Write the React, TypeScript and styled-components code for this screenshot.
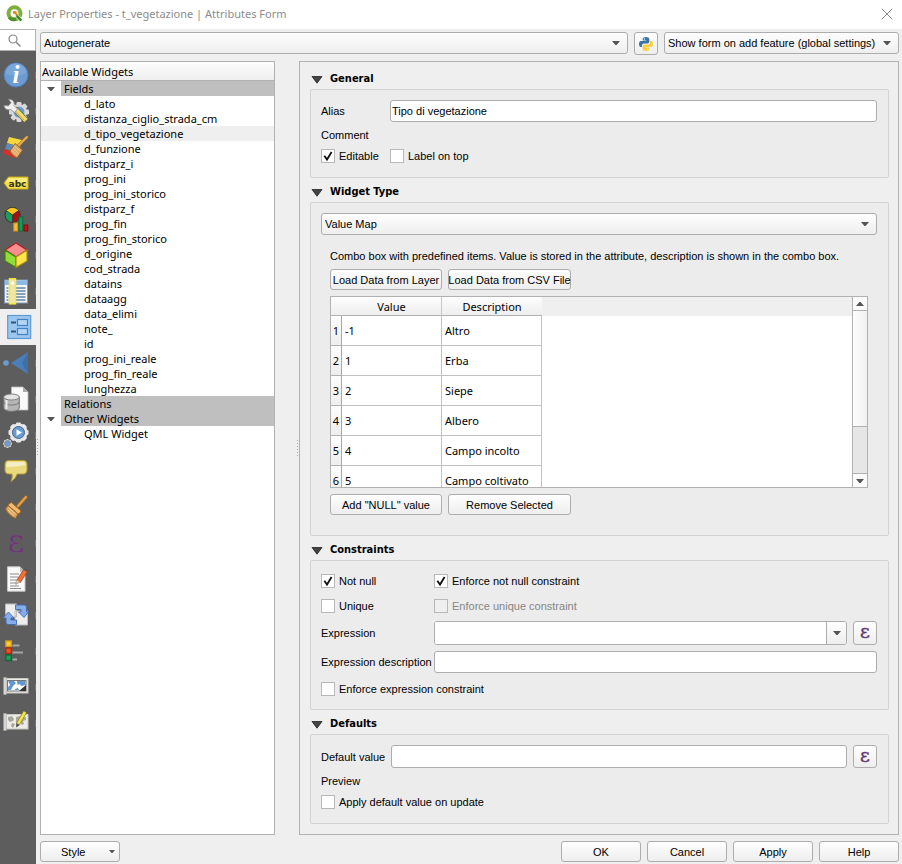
import React, { ReactNode, useId, useState } from "react";
import styled, { createGlobalStyle, css } from "styled-components";

const UI = `"Liberation Sans", Arial, sans-serif`;
const VIEW = `"Noto Sans", "Open Sans", sans-serif`;
const HEAD = `"DejaVu Sans Condensed", "Noto Sans", sans-serif`;
const LINE = "#b1b1b1";

const GlobalStyle = createGlobalStyle`
  *, *::before, *::after { box-sizing: border-box; }
  body { margin: 0; background: #efefef; color: #000; font: 11px/14px ${UI}; }
  button, input, select { font: inherit; color: inherit; margin: 0; }
  svg { display: block; flex: none; overflow: visible; }
`;

/* ---------- window frame ---------- */
const Window = styled.div`
  min-height: 100vh;
  display: grid;
  grid-template-rows: 29px 1fr;
`;
const TitleBar = styled.header`
  display: flex;
  align-items: center;
  gap: 4px;
  padding: 0 9px 2px 6px;
  background: #fff;
`;
const WindowTitle = styled.h1`
  flex: 1;
  margin: 0;
  font: 11px/16px ${VIEW};
  color: #8c8c8c;
`;
const CloseButton = styled.button`
  border: 0;
  padding: 0;
  background: none;
`;
const Body = styled.div`
  display: grid;
  grid-template-columns: 36px 4px minmax(0, 1fr);
`;

/* ---------- side bar ---------- */
const Sidebar = styled.nav`
  display: flex;
  flex-direction: column;
  background: #5d5d5d;
`;
const SearchBox = styled.label`
  display: grid;
  grid-template-columns: 26px 1fr;
  align-items: center;
  height: 22px;
  margin-bottom: 6px;
  padding-left: 8px;
  background: #fff;
  border: 1px solid ${LINE};
  border-left: 0;
`;
const SearchInput = styled.input`
  min-width: 0;
  width: 100%;
  border: 0;
  padding: 0;
  outline: 0;
`;
const NavButton = styled.button<{ $active: boolean }>`
  display: flex;
  align-items: center;
  justify-content: space-between;
  height: 36px;
  border: 0;
  padding: 0 0 0 ${(p) => (p.$active ? 6 : 3)}px;
  background: ${(p) => (p.$active ? "#efefef" : "transparent")};
  &::after {
    content: "";
    width: 1px;
    height: 7px;
    background: ${(p) => (p.$active ? "transparent" : "#6475a3")};
  }
`;

/* ---------- main area ---------- */
const Main = styled.main`
  display: grid;
  grid-template-rows: 23px 1fr 21px;
  gap: 6px;
  padding: 3px 3px 2px 0;
`;
const TopRow = styled.div`
  display: grid;
  grid-template-columns: minmax(0, 1fr) 24px 235px;
  gap: 6px;
  align-items: start;
`;
const Panes = styled.div`
  display: grid;
  grid-template-columns: 235px 24px minmax(0, 1fr);
`;
const Grip = styled.div<{ $end?: boolean }>`
  display: flex;
  align-items: center;
  justify-content: ${(p) => (p.$end ? "flex-end" : "center")};
`;
const Footer = styled.footer`
  display: flex;
  gap: 6px;
`;
const Spacer = styled.div`
  flex: 1;
`;

/* ---------- controls ---------- */
const raised = css`
  border: 1px solid #adadad;
  border-radius: 3px;
  background: linear-gradient(#fefefe, #eeeeee);
`;
const Button = styled.button<{ $width: number; $menu?: boolean }>`
  ${raised}
  display: flex;
  align-items: center;
  justify-content: ${(p) => (p.$menu ? "space-between" : "center")};
  width: ${(p) => p.$width}px;
  height: 21px;
  padding: ${(p) => (p.$menu ? "0 4px 0 20px" : "0")};
  white-space: nowrap;
`;
const ToolButton = styled.button`
  ${raised}
  display: grid;
  place-items: center;
  align-self: stretch;
  width: 24px;
  padding: 0;
`;
const SelectFrame = styled.div`
  display: grid;
  align-items: center;
  > * { grid-area: 1 / 1; }
  > svg { justify-self: end; margin-right: 8px; pointer-events: none; }
`;
const Select = styled.select`
  ${raised}
  appearance: none;
  width: 100%;
  height: 22px;
  padding: 0 20px 0 3px;
  outline: 0;
`;
const TextInput = styled.input`
  width: 100%;
  height: 22px;
  min-width: 0;
  padding: 0 1px;
  border: 1px solid #adadad;
  border-radius: 3px;
  background: #fff;
  outline: 0;
`;
const ComboFrame = styled.div`
  display: grid;
  grid-template-columns: minmax(0, 1fr) 20px;
  height: 24px;
  border: 1px solid #adadad;
  border-radius: 3px;
  overflow: hidden;
  background: #fff;
`;
const ComboInput = styled.input`
  min-width: 0;
  border: 0;
  padding: 0 2px;
  outline: 0;
`;
const ComboArrow = styled.button`
  display: grid;
  place-items: center;
  border: 0;
  border-left: 1px solid #adadad;
  padding: 0;
  background: linear-gradient(#fefefe, #eeeeee);
`;
const CheckLabel = styled.label<{ $disabled?: boolean }>`
  display: flex;
  align-items: center;
  gap: 4px;
  height: 16px;
  white-space: nowrap;
  color: ${(p) => (p.$disabled ? "#868686" : "#000")};
`;
const CheckFrame = styled.span`
  display: grid;
  place-items: center;
  > * { grid-area: 1 / 1; }
  > svg { visibility: hidden; pointer-events: none; }
  > input:checked + svg { visibility: visible; }
`;
const CheckInput = styled.input`
  appearance: none;
  width: 14px;
  height: 14px;
  border: 1px solid #b8b8b8;
  background: #fff;
  &:disabled { background: #efefef; }
`;

/* ---------- widget tree ---------- */
const TreePanel = styled.section`
  background: #fff;
  border: 1px solid ${LINE};
  font: 11px/15px ${VIEW};
`;
const TreeHeader = styled.h2`
  height: 19px;
  margin: 0;
  padding: 2px 1px;
  border-bottom: 1px solid ${LINE};
  background: linear-gradient(#fdfdfd, #eeeeee);
  font: 11px/15px ${VIEW};
`;
const TreeList = styled.ul`
  margin: 0;
  padding: 0;
  list-style: none;
`;
const TreeGroup = styled.div`
  display: grid;
  grid-template-columns: 20px 1fr;
  align-items: center;
`;
const GroupName = styled.span`
  padding-left: 3px;
  background: #bfbfbf;
`;
const Twisty = styled.button`
  display: grid;
  place-items: center;
  border: 0;
  padding: 0;
  background: none;
`;
const TreeItem = styled.li<{ $current: boolean }>`
  height: 15px;
  padding-left: 43px;
  background: ${(p) => (p.$current ? "#efefef" : "transparent")};
`;

/* ---------- form sections ---------- */
const FormPane = styled.section`
  display: flex;
  flex-direction: column;
  gap: 4px;
  padding: 7px 9px 10px 10px;
  border: 1px solid ${LINE};
`;
const SectionTitle = styled.h2`
  height: 20px;
  margin: 0;
`;
const SectionToggle = styled.button`
  display: flex;
  align-items: center;
  gap: 7px;
  height: 20px;
  padding: 0 0 0 1px;
  border: 0;
  background: none;
  font: bold 11px/16px ${HEAD};
  svg { margin-top: 2px; }
`;
const Group = styled.div<{ $bottom: number; $top?: number }>`
  padding: ${(p) => p.$top ?? 10}px 11px ${(p) => p.$bottom}px 10px;
  border: 1px solid #d3d3d3;
  border-radius: 2px;
  background: #ececec;
`;
const Fields = styled.div<{ $label: number }>`
  display: grid;
  grid-template-columns: ${(p) => p.$label}px minmax(0, 1fr);
  row-gap: 6px;
  align-items: center;
`;
const WithButton = styled.div`
  display: grid;
  grid-template-columns: minmax(0, 1fr) 24px;
  gap: 6px;
`;
const DefaultInput = styled(TextInput)`
  height: 23px;
`;
const DefaultCheck = styled.div`
  padding-top: 6px;
`;
const CheckGrid = styled.div`
  display: grid;
  grid-template-columns: 113px 1fr;
  grid-auto-rows: 25px;
  align-items: center;
`;
const ConstraintFields = styled(Fields)`
  margin: 3px 0;
`;
const ValueMap = styled.div`
  display: grid;
  gap: 6px;
  padding: 14px 9px 0;
`;
const Hint = styled.p`
  margin: 0;
  white-space: nowrap;
`;
const ButtonRow = styled.div`
  display: flex;
  gap: 6px;
`;

/* ---------- value table ---------- */
const TableFrame = styled.div`
  display: grid;
  grid-template-columns: minmax(0, 1fr) 15px;
  height: 192px;
  border: 1px solid ${LINE};
  background: #fff;
  overflow: hidden;
`;
const TableView = styled.div`
  min-height: 0;
  overflow: hidden;
`;
const Table = styled.table`
  width: 100%;
  table-layout: fixed;
  border-collapse: separate;
  border-spacing: 0;
  font: 11px/15px ${VIEW};
`;
const HeadCell = styled.th<{ $last?: boolean }>`
  height: 19px;
  padding: 0;
  font-weight: normal;
  border-bottom: 1px solid ${LINE};
  border-right: ${(p) => (p.$last ? "0" : "1px solid #c8c8c8")};
  background: linear-gradient(#fdfdfd, #eeeeee);
`;
const CornerCell = styled(HeadCell)`
  border-right: 0;
`;
const HeadFill = styled.td`
  padding: 0;
  background: #efefef;
`;
const RowHead = styled.th`
  height: 30px;
  padding: 0;
  font-weight: normal;
  border-right: 1px solid #a8a8a8;
  border-bottom: 1px solid ${LINE};
  background: linear-gradient(#fdfdfd, #eeeeee);
`;
const Cell = styled.td`
  padding: 0 3px;
  border-right: 1px solid #c2c2c2;
  border-bottom: 1px solid #c2c2c2;
  white-space: nowrap;
`;
const Scrollbar = styled.div`
  display: grid;
  grid-template-rows: 14px 116px 1fr 14px;
  border-left: 1px solid ${LINE};
  background: #e6e6e6;
`;
const ScrollButton = styled.button<{ $down?: boolean }>`
  display: grid;
  place-items: center;
  padding: 0;
  border: 0 solid ${LINE};
  border-width: ${(p) => (p.$down ? "1px 0 0" : "0 0 1px")};
  background: #fafafa;
  svg { transform: ${(p) => (p.$down ? "none" : "rotate(180deg)")}; }
`;
const Thumb = styled.div`
  border-bottom: 1px solid ${LINE};
  background: linear-gradient(90deg, #fefefe, #f1f1f1);
`;

/* ---------- small glyphs ---------- */
const Arrow = ({ w = 8 }: { w?: number }) => (
  <svg width={w} height={w / 2} viewBox="0 0 8 4"><path d="M0 0h8L4.6 4H3.4z" fill="#555" /></svg>
);
const SectionArrow = () => (
  <svg width="12" height="8" viewBox="0 0 12 8"><path d="M1 .5h10L6 7.200z" fill="#444" stroke="#222" strokeWidth=".8" /></svg>
);
const Tick = () => (
  <svg width="10" height="10" viewBox="0 0 10 10">
    <path d="M1.300 4.700 4 8.500 8.600 1" fill="none" stroke="#111" strokeWidth="1.800" />
  </svg>
);
const Dots = () => (
  <svg width="2" height="18" viewBox="0 0 2 18">
    {[0, 3, 6, 9, 12, 15].map((y) => <rect key={y} y={y + 1} width="1" height="1" fill="#aaa" />)}
  </svg>
);
const Epsilon = () => (
  <svg width="20" height="20" viewBox="0 0 20 20">
    <text x="10" y="15" textAnchor="middle" fontFamily="DejaVu Serif, Liberation Serif, serif" fontSize="19" fill="#643a6b" stroke="#643a6b" strokeWidth=".4">ε</text>
  </svg>
);
const Logo = () => (
  <svg width="18" height="18" viewBox="0 0 18 18">
    <circle cx="8.500" cy="8.300" r="6" fill="none" stroke="#7fae3c" strokeWidth="4" />
    <path d="M3 12.500a6.300 6.300 0 0 0 7 1.700" fill="none" stroke="#4f8f2b" strokeWidth="3" />
    <path d="m9.500 9.500 2.500.3 4.800 5.200-2.600 1.800-4.300-4.600z" fill="#3f8b2c" stroke="#fff" strokeWidth=".7" />
    <path d="m7 6 4 .5-.7 1.200 1.600 2-1.500.8-1.800-2-1.200.9z" fill="#ee7913" />
  </svg>
);
const Python = () => (
  <svg width="14" height="14" viewBox="0 0 14 14">
    <path d="M7 0C4.300 0 3.700 1 3.700 2v1.500h3.500V4H2C.8 4 0 5.200 0 7s.8 3 1.800 3H3V8.300C3 7.200 4 6.500 5 6.500h3.500c1 0 1.800-.8 1.800-1.700V2C10.300.8 9 0 7 0z" fill="#3a75a8" />
    <path d="M7 14c2.700 0 3.300-1 3.300-2v-1.500H6.800V10H12c1.200 0 2-1.200 2-3s-.8-3-1.800-3H11v1.700c0 1.100-1 1.800-2 1.800H5.500c-1 0-1.800.8-1.800 1.700V12c0 1.200 1.300 2 3.300 2z" fill="#fdcf3c" />
    <circle cx="5.400" cy="1.900" r=".7" fill="#fff" /><circle cx="8.600" cy="12.100" r=".7" fill="#fff" />
  </svg>
);

/* ---------- side bar drawings, all on a 26 unit square ---------- */
const gear = (cx: number, cy: number, r: number) =>
  [0, 45, 90, 135].map((a) => (
    <rect key={a} x={cx - r} y={cy - r / 4} width={r * 2} height={r / 2} rx={r / 8} transform={`rotate(${a} ${cx} ${cy})`} />
  ));

const BrushHead = () => (
  <>
    <path d="M15 12 23 3" stroke="#a3691f" strokeWidth="3.400" strokeLinecap="round" />
    <path d="M15 12 23 3" stroke="#e2a14a" strokeWidth="2" strokeLinecap="round" />
    <path d="M8.500 8.500 18 17c-.5 1.800-2 2.500-3 3l-10-8.500c.8-1.500 2-2.500 3.500-3z" fill="#f0ba70" stroke="#9c6524" />
    <path d="m5 11.500 10 8.500-2.500 4.500C9 23 4.500 19.500 2.500 15z" fill="#dba45c" stroke="#9c6524" />
    <path d="m5 16 6 5.500M5.500 13.500l7 6.500" stroke="#f7d7a5" strokeWidth=".9" />
  </>
);
const MapSheet = () => (
  <>
    <rect x="2.500" y="4.500" width="22.500" height="14.500" fill="#ecebe6" stroke="#c9c9c4" />
    <path d="M.7 3.500h2.600v17H.7z" fill="#ddd" stroke="#aaa" strokeWidth=".7" />
  </>
);

const drawings: { name: string; art: ReactNode }[] = [
  { name: "Information", art: <>
    <circle cx="13" cy="13" r="12" fill="#6b9bd2" stroke="#4e7fbc" />
    <path d="M2.500 12a10.500 10.500 0 0 1 21-1c-6 3-14 4-21 1z" fill="#8bb3de" opacity=".5" />
    <text x="13" y="20.500" textAnchor="middle" fontFamily="Liberation Serif, serif" fontStyle="italic" fontWeight="bold" fontSize="25" fill="#fff">i</text></> },
  { name: "Source", art: <>
    <g fill="#dadada">{gear(16, 14, 10)}</g>
    <circle cx="16" cy="14" r="7.800" fill="#dadada" /><circle cx="16" cy="14" r="5.500" fill="#6b9bd2" />
    <path d="m11.500 10.500 12 12.500" stroke="#6f6a35" strokeWidth="6" />
    <path d="m12 11 11 11.500" stroke="#f1dd78" strokeWidth="4.400" />
    <path d="m12.500 13 9 9.500" stroke="#c6a93e" />
    <path d="M1 7.500c.5 3.500 3.500 5 6.500 4l4 3 3-3.500L11 7.500C12 4 9.500 1 5.500 1.200L8 4.700 5.500 7.800z" fill="#efefef" stroke="#8d8d8d" strokeWidth=".8" /></> },
  { name: "Symbology", art: <>
    <path d="m6 3 13 3-2 7L4 9z" fill="#f4d73c" /><path d="m4 9 13 4-2 6L2 15z" fill="#6089b8" /><path d="m2 15 12 4-3 5L0 19z" fill="#db2e2a" />
    <path d="m15 12 9-9" stroke="#a3691f" strokeWidth="3" strokeLinecap="round" /><path d="m15 12 9-9" stroke="#e8ac58" strokeWidth="1.800" strokeLinecap="round" />
    <path d="m12 9.500 7.500 6.500-5.500 8C11.500 22.500 8.500 20 7 17z" fill="#dfaa69" stroke="#9c6524" />
    <path d="m10 14 6 6M8.500 16l6 5.500M11.500 12l6 5.500" stroke="#f3cf9a" strokeWidth=".8" /></> },
  { name: "Labels", art: <>
    <path d="m1 13 4.500-6H25v12H5.500z" fill="#f5e04c" stroke="#c9a91c" />
    <path d="M5.800 8H24v4H3z" fill="#fbf08c" opacity=".7" />
    <text x="14.500" y="16.500" textAnchor="middle" fontFamily="DejaVu Sans" fontWeight="bold" fontSize="9" fill="#33321c">abc</text></> },
  { name: "Diagrams", art: <>
    <circle cx="9.500" cy="9" r="7.500" fill="#16a05c" stroke="#333" />
    <path d="M9.500 9 3.300 4.700a7.500 7.500 0 0 1 12.400 0z" fill="#f8c61c" stroke="#333" strokeWidth=".8" />
    <path d="m9.500 9 6.200-4.300A7.500 7.500 0 0 1 9.500 16.500z" fill="#a80f14" stroke="#333" strokeWidth=".8" />
    <rect x="10.800" y="17" width="4" height="8" fill="#f5bc35" stroke="#d88f12" /><rect x="16" y="11" width="3.800" height="14" fill="#149a5c" stroke="#0a6b3e" /><rect x="21" y="19" width="3.800" height="6" fill="#c2131a" stroke="#820b10" /></> },
  { name: "3D View", art: <>
    <path d="m13 1 11 7-11 7L2 8z" fill="#f78d8d" stroke="#b02426" strokeWidth="1.400" />
    <path d="m2 8 11 7v10.500L2 19z" fill="#91de36" stroke="#3f7f12" strokeWidth="1.200" /><path d="m24 8-11 7v10.500L24 19z" fill="#fae64a" stroke="#b08c12" strokeWidth="1.200" /></> },
  { name: "Fields", art: <>
    <rect x="1.500" y="2" width="23" height="23" fill="#f5f5f5" stroke="#8098b5" /><path d="M2 2.500h22v4.500H2z" fill="#8db8e6" />
    <path d="M3.500 10h2m7 0h10M3.500 13h2m7 0h10M3.500 16h2m7 0h10M3.500 19h2m7 0h10M3.500 22h2m7 0h10" stroke="#6185ae" strokeWidth="1.500" />
    <rect x="6.500" y=".8" width="6" height="25" fill="#f0e3ae" stroke="#f5ea34" strokeWidth="1.500" /><circle cx="9.500" cy="5" r="1.500" fill="#fff" /></> },
  { name: "Attributes Form", art: <>
    <rect x="1.700" y="1.500" width="23" height="23" fill="#9cc6ee" stroke="#5e9ad2" strokeWidth="1.200" />
    <path d="M5 8.500h5M5 17.500h5" stroke="#2d5781" strokeWidth="2.200" />
    <rect x="11.500" y="5.500" width="10" height="6" fill="#b4d5f4" stroke="#3e84c4" strokeWidth="1.200" /><rect x="11.500" y="14.500" width="10" height="6" fill="#b4d5f4" stroke="#3e84c4" strokeWidth="1.200" /></> },
  { name: "Joins", art: <>
    <path d="M8 13 25 2v22z" fill="#4a7eb6" /><path d="M25 2v22l-6-11z" fill="#36689e" opacity=".6" /><circle cx="3" cy="13" r="2.800" fill="#6b9bd2" /></> },
  { name: "Auxiliary Storage", art: <>
    <path d="M8.500 1H20l5 5v18H8.500z" fill="#f9f9f9" stroke="#bbb" strokeWidth=".8" /><path d="M20 1v5h5z" fill="#aaa" />
    <path d="M.7 11v11c0 4.500 15.600 4.500 15.600 0V11z" fill="#b5b5b5" stroke="#727272" /><ellipse cx="8.500" cy="11" rx="7.800" ry="3" fill="#e4e4e4" stroke="#808080" />
    <path d="M1 16c0 4 15 4 15 0" fill="none" stroke="#777" /><path d="M3.500 14v9" stroke="#ececec" strokeWidth="2" /></> },
  { name: "Actions", art: <>
    <g fill="#e8e8e8">{gear(15.5, 10.5, 10)}</g><g fill="#e8e8e8" transform="rotate(22.500 15.500 10.500)">{gear(15.5, 10.5, 9)}</g>
    <circle cx="15.500" cy="10.500" r="6" fill="#6b9bd2" stroke="#45658c" /><path d="m13.500 7.300 5.500 3.200-5.500 3.200z" fill="#fff" />
    <g fill="#d5d5d5">{gear(4.5, 21.5, 4.5)}</g><circle cx="4.500" cy="21.500" r="2.900" fill="#6b9bd2" stroke="#888" strokeWidth=".6" /></> },
  { name: "Display", art: <>
    <path d="M6 2.500h14c3 0 4 1.500 4 4v5c0 3-1.500 4.500-4 4.500h-6c-1 3-3 6-6 7.500 1-2 1.500-5 1-7.500H6c-3 0-4-1.500-4-4.500v-5c0-2.500 1-4 4-4z" fill="#e9da7d" stroke="#b39c36" />
    <path d="M6.500 4h13c2 0 3 1 3 3-6 1-12 2-19 2V7c0-2 1-3 3-3z" fill="#fff" opacity=".55" /></> },
  { name: "Rendering", art: <BrushHead /> },
  { name: "Variables", art: <text x="13" y="22" textAnchor="middle" fontFamily="DejaVu Serif, Liberation Serif, serif" fontSize="32" fill="#643a6b" stroke="#7b4d83" strokeWidth=".5">ε</text> },
  { name: "Metadata", art: <>
    <path d="M4.500.8H17l5 5v19.400H4.500z" fill="#fbfbfb" stroke="#c4c4c4" /><path d="M17 .8v5h5z" fill="#bbb" />
    <path d="M7 8h9M7 11h8M7 14h6M7 17h6M7 20h9M7 22.500h11" stroke="#8b8b8b" /><path d="m15.500 15.500 7-11" stroke="#b2401d" strokeWidth="5" /><path d="m15.500 15.500 7-11" stroke="#ee7236" strokeWidth="3.400" />
    <path d="m13.500 13.500-.8 5 4.500-2.500z" fill="#e9c9a1" stroke="#777" strokeWidth=".5" /><path d="m21 3 4 2.500" stroke="#555" strokeWidth="2" /></> },
  { name: "Dependencies", art: <>
    <path d="M2.500 2h11v13h-11zM12 9h12.500v14H12z" fill="#ededed" stroke="#bbb" />
    <path d="M12.500 3H21c2 0 2.500 1 2.500 3v4h2L21 15.500 15.500 10H18V7.500h-5.500z" fill="#86adea" stroke="#3e6cb3" strokeWidth=".9" />
    <path d="M13.500 22.500H5.500c-2 0-2.500-1-2.500-3V16H0l5.500-6L11 16H8v2h5.500z" fill="#86adea" stroke="#3e6cb3" strokeWidth=".9" /></> },
  { name: "Legend", art: <>
    <rect x="2.800" y="3" width="5.500" height="5.500" fill="#ffce2b" stroke="#d89a0e" strokeWidth="1.400" /><rect x="2.800" y="10" width="5.500" height="5.500" fill="#f4511e" stroke="#b02b0a" strokeWidth="1.400" /><rect x="2.800" y="17" width="5.500" height="5.500" fill="#19a65b" stroke="#0b6b36" strokeWidth="1.400" />
    <path d="M9.500 7.500h7M9.500 14.500h10.500M9.500 21.500h4.500" stroke="#a5a5a5" strokeWidth="2" /></> },
  { name: "QGIS Server", art: <>
    <MapSheet /><rect x="4.500" y="6.500" width="18.500" height="10.500" fill="#fff" stroke="#777" />
    <path d="M5 7h6l2 2-3 3-2 4H5v-3l2-2zM14 7h8.500v4l-4 1-2-2-2 1zM12 15l3-1 1 2h-4z" fill="#6397cf" /><path d="m16 17 7-6v6z" fill="#333" /></> },
  { name: "Digitizing", art: <>
    <MapSheet /><path d="m5 7 4-1 2 3-1 2-3 1-2-2zM9 13l3 1-2 4-2-2zM13 7l4-1 1 2 5-1v3l-3 1 1 3-2 1-2-3-1 4-2 1-1-5z" fill="#a7a7a0" />
    <path d="m15 14 7-12" stroke="#8d8415" strokeWidth="4" /><path d="m15 14 7-12" stroke="#f0e24f" strokeWidth="2.600" /><path d="m13.300 13-.3 4.500 3.700-2.500z" fill="#555" /></> },
];

/* ---------- composed parts ---------- */
function Check({ label, checked = false, disabled }: { label: string; checked?: boolean; disabled?: boolean }) {
  return (
    <CheckLabel $disabled={disabled}>
      <CheckFrame><CheckInput type="checkbox" defaultChecked={checked} disabled={disabled} /><Tick /></CheckFrame>
      {label}
    </CheckLabel>
  );
}
function Dropdown({ label, value }: { label: string; value: string }) {
  return <SelectFrame><Select aria-label={label} defaultValue={value}><option>{value}</option></Select><Arrow /></SelectFrame>;
}
function Section({ title, top, bottom, children }: { title: string; top?: number; bottom: number; children: ReactNode }) {
  const [open, setOpen] = useState(true);
  return (
    <div>
      <SectionTitle>
        <SectionToggle type="button" aria-expanded={open} onClick={() => setOpen(!open)}><SectionArrow />{title}</SectionToggle>
      </SectionTitle>
      {open && <Group $top={top} $bottom={bottom}>{children}</Group>}
    </div>
  );
}

const tree = [
  { name: "Fields", items: ["d_lato", "distanza_ciglio_strada_cm", "d_tipo_vegetazione", "d_funzione", "distparz_i", "prog_ini", "prog_ini_storico", "distparz_f", "prog_fin", "prog_fin_storico", "d_origine", "cod_strada", "datains", "dataagg", "data_elimi", "note_", "id", "prog_ini_reale", "prog_fin_reale", "lunghezza"] },
  { name: "Relations", items: [] },
  { name: "Other Widgets", items: ["QML Widget"] },
];
const values = [["-1", "Altro"], ["1", "Erba"], ["2", "Siepe"], ["3", "Albero"], ["4", "Campo incolto"], ["5", "Campo coltivato"]];

export default function App() {
  const id = useId();
  const [page, setPage] = useState("Attributes Form");
  const [current, setCurrent] = useState("d_tipo_vegetazione");
  return (
    <Window>
      <GlobalStyle />
      <TitleBar>
        <Logo />
        <WindowTitle>Layer Properties - t_vegetazione | Attributes Form</WindowTitle>
        <CloseButton type="button" aria-label="Close">
          <svg width="12" height="12" viewBox="0 0 12 12"><path d="m.8.8 10.400 10.400M11.200.8.8 11.200" stroke="#888" /></svg>
        </CloseButton>
      </TitleBar>
      <Body>
        <Sidebar>
          <SearchBox>
            <svg width="13" height="13" viewBox="0 0 13 13"><circle cx="5" cy="5" r="4" fill="none" stroke="#888" strokeWidth="1.200" /><path d="m8 8 4.500 4.500" stroke="#888" strokeWidth="1.500" /></svg>
            <SearchInput aria-label="Search" />
          </SearchBox>
          {drawings.map((d) => (
            <NavButton key={d.name} type="button" aria-label={d.name} $active={d.name === page} onClick={() => setPage(d.name)}>
              <svg width="26" height="26" viewBox="0 0 26 26" fill="none">{d.art}</svg>
            </NavButton>
          ))}
        </Sidebar>
        <Grip><Dots /></Grip>
        <Main>
          <TopRow>
            <Dropdown label="Form layout" value="Autogenerate" />
            <ToolButton type="button" aria-label="Python init function"><Python /></ToolButton>
            <Dropdown label="Show form" value="Show form on add feature (global settings)" />
          </TopRow>
          <Panes>
            <TreePanel>
              <TreeHeader>Available Widgets</TreeHeader>
              <TreeList>
                {tree.map((g) => (
                  <li key={g.name}>
                    <TreeGroup>
                      {g.items.length ? <Twisty type="button" aria-label={`Collapse ${g.name}`}><Arrow /></Twisty> : <span />}
                      <GroupName>{g.name}</GroupName>
                    </TreeGroup>
                    <TreeList>
                      {g.items.map((t) => <TreeItem key={t} $current={t === current} onClick={() => setCurrent(t)}>{t}</TreeItem>)}
                    </TreeList>
                  </li>
                ))}
              </TreeList>
            </TreePanel>
            <Grip $end><Dots /></Grip>
            <FormPane>
              <Section title="General" bottom={13}>
                <Fields $label={69}>
                  <label htmlFor={`${id}alias`}>Alias</label>
                  <TextInput id={`${id}alias`} defaultValue="Tipo di vegetazione" />
                  <span>Comment</span><span />
                  <Check label="Editable" checked />
                  <Check label="Label on top" />
                </Fields>
              </Section>
              <Section title="Widget Type" bottom={20}>
                <Dropdown label="Widget type" value="Value Map" />
                <ValueMap>
                  <Hint>Combo box with predefined items. Value is stored in the attribute, description is shown in the combo box.</Hint>
                  <ButtonRow>
                    <Button type="button" $width={112}>Load Data from Layer</Button>
                    <Button type="button" $width={123}>Load Data from CSV File</Button>
                  </ButtonRow>
                  <TableFrame>
                    <TableView>
                      <Table>
                        <colgroup><col width="11" /><col width="100" /><col width="100" /><col /></colgroup>
                        <thead>
                          <tr><CornerCell /><HeadCell scope="col">Value</HeadCell><HeadCell scope="col" $last>Description</HeadCell><HeadFill /></tr>
                        </thead>
                        <tbody>
                          {values.map(([v, d], i) => (
                            <tr key={v}><RowHead scope="row">{i + 1}</RowHead><Cell>{v}</Cell><Cell>{d}</Cell></tr>
                          ))}
                        </tbody>
                      </Table>
                    </TableView>
                    <Scrollbar>
                      <ScrollButton type="button" aria-label="Scroll up"><Arrow /></ScrollButton>
                      <Thumb />
                      <span />
                      <ScrollButton type="button" aria-label="Scroll down" $down><Arrow /></ScrollButton>
                    </Scrollbar>
                  </TableFrame>
                  <ButtonRow>
                    <Button type="button" $width={112}>Add "NULL" value</Button>
                    <Button type="button" $width={123}>Remove Selected</Button>
                  </ButtonRow>
                </ValueMap>
              </Section>
              <Section title="Constraints" top={7} bottom={8}>
                <CheckGrid>
                  <Check label="Not null" checked />
                  <Check label="Enforce not null constraint" checked />
                  <Check label="Unique" />
                  <Check label="Enforce unique constraint" disabled />
                </CheckGrid>
                <ConstraintFields $label={113}>
                  <label htmlFor={`${id}expr`}>Expression</label>
                  <WithButton>
                    <ComboFrame>
                      <ComboInput id={`${id}expr`} />
                      <ComboArrow type="button" aria-label="Recent expressions"><Arrow /></ComboArrow>
                    </ComboFrame>
                    <ToolButton type="button" aria-label="Edit expression"><Epsilon /></ToolButton>
                  </WithButton>
                  <label htmlFor={`${id}desc`}>Expression description</label>
                  <TextInput id={`${id}desc`} />
                </ConstraintFields>
                <CheckGrid><Check label="Enforce expression constraint" /></CheckGrid>
              </Section>
              <Section title="Defaults" bottom={13}>
                <Fields $label={70}>
                  <label htmlFor={`${id}def`}>Default value</label>
                  <WithButton>
                    <DefaultInput id={`${id}def`} />
                    <ToolButton type="button" aria-label="Edit default expression"><Epsilon /></ToolButton>
                  </WithButton>
                  <span>Preview</span><span />
                </Fields>
                <DefaultCheck><Check label="Apply default value on update" /></DefaultCheck>
              </Section>
            </FormPane>
          </Panes>
          <Footer>
            <Button type="button" $width={80} $menu>Style<Arrow w={6} /></Button>
            <Spacer />
            <Button type="button" $width={80}>OK</Button>
            <Button type="button" $width={80}>Cancel</Button>
            <Button type="button" $width={80}>Apply</Button>
            <Button type="button" $width={80}>Help</Button>
          </Footer>
        </Main>
      </Body>
    </Window>
  );
}
